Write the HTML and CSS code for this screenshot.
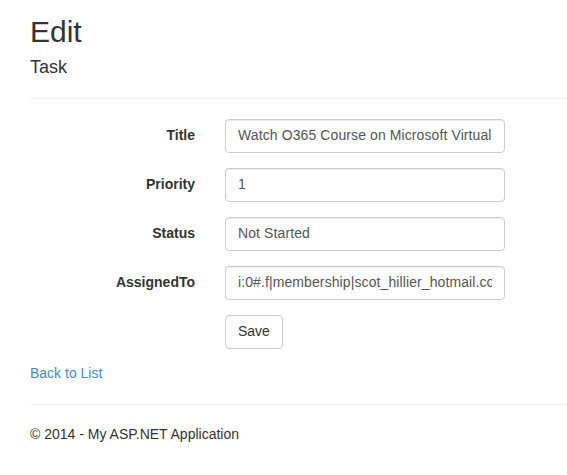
FILE: index.html
```html
<!DOCTYPE html>
<html>
<head>
<meta charset="utf-8">
<title>Edit</title>
<link rel="stylesheet" href="styles.css">
</head>
<body>
<div class="container">
  <h2 class="page-title">Edit</h2>
  <form class="form-horizontal">
    <h4 class="subtitle">Task</h4>
    <hr class="rule">
    <div class="form-group">
      <label class="control-label" for="Title">Title</label>
      <input class="form-control" id="Title" type="text" value="Watch O365 Course on Microsoft Virtual Academy">
    </div>
    <div class="form-group">
      <label class="control-label" for="Priority">Priority</label>
      <input class="form-control" id="Priority" type="text" value="1">
    </div>
    <div class="form-group">
      <label class="control-label" for="Status">Status</label>
      <input class="form-control" id="Status" type="text" value="Not Started">
    </div>
    <div class="form-group">
      <label class="control-label" for="AssignedTo">AssignedTo</label>
      <input class="form-control" id="AssignedTo" type="text" value="i:0#.f|membership|scot_hillier_hotmail.com#ext#@hillier.onmicrosoft.com">
    </div>
    <div class="form-group">
      <span></span>
      <div><button type="button" class="btn">Save</button></div>
    </div>
  </form>
  <div class="back"><a href="#" class="link">Back to List</a></div>
  <hr class="rule">
  <footer class="footer">
    <p class="copy">&copy; 2014 - My ASP.NET Application</p>
  </footer>
</div>
</body>
</html>
```
FILE: styles.css
```css
* { box-sizing: border-box; }
html, body { margin: 0; padding: 0; }
body {
  font-family: "Liberation Sans", Arial, Helvetica, sans-serif;
  font-size: 14px;
  line-height: 1.428571429;
  color: #333333;
  background: #ffffff;
}
.container {
  padding: 0 0 0 30px;
  overflow: hidden;
}
.page-title {
  font-size: 30px;
  font-weight: 500;
  line-height: 1.1;
  margin: 15px 0 10px;
}
.subtitle {
  font-size: 18px;
  font-weight: 500;
  line-height: 1.1;
  margin: 10px 0 10px;
}
.rule {
  border: 0;
  border-top: 1px solid #eeeeee;
  margin: 20px 0;
  height: 0;
}
.form-horizontal { margin: 0; }
.form-group {
  display: grid;
  grid-template-columns: 165px 280px;
  column-gap: 30px;
  margin-bottom: 15px;
}
.control-label {
  text-align: right;
  font-weight: bold;
  padding-top: 6px;
}
.form-control {
  display: block;
  width: 280px;
  height: 34px;
  padding: 5px 12px 7px;
  font-family: inherit;
  font-size: 14px;
  line-height: 1.428571429;
  letter-spacing: 0.1px;
  color: #555555;
  background: #ffffff;
  border: 1px solid #cccccc;
  border-radius: 4px;
  box-shadow: inset 0 1px 1px rgba(0,0,0,0.075);
}
.btn {
  display: inline-block;
  height: 34px;
  padding: 5px 12px 7px;
  font-family: inherit;
  font-size: 14px;
  line-height: 1.428571429;
  color: #333333;
  background: #ffffff;
  border: 1px solid #cccccc;
  border-radius: 4px;
}
.back { line-height: 20px; margin-top: -1px; padding-bottom: 1px; }
.link { color: #428bca; text-decoration: none; }
.copy { margin: -1px 0 10px; }
```
